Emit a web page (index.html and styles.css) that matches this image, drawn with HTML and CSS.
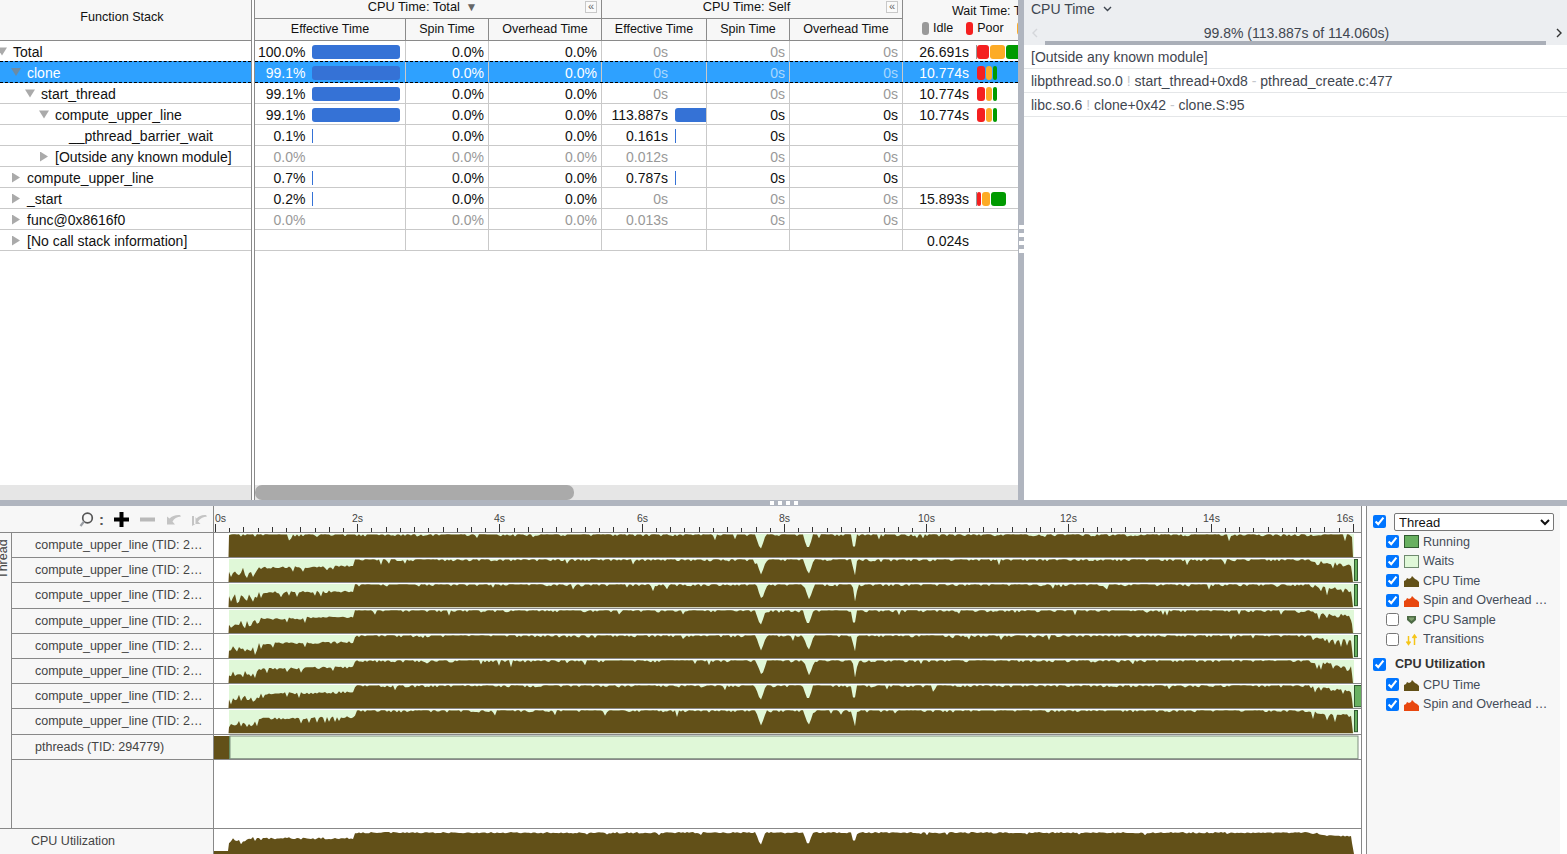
FILE: index.html
```html
<!DOCTYPE html>
<html lang="en">
<head>
<meta charset="utf-8">
<title>Bottom-up</title>
<link rel="stylesheet" href="styles.css">
</head>
<body>
<div class="app">
  <section class="top">
    <div class="grid-pane">
      <div class="fn-col">
        <div class="fn-head">Function Stack</div>
        <div class="fn-rows">
          <div class="fn-row d0"><i class="tw open"></i>Total</div>
          <div class="fn-row d1 sel"><i class="tw open"></i>clone</div>
          <div class="fn-row d2"><i class="tw open"></i>start_thread</div>
          <div class="fn-row d3"><i class="tw open"></i>compute_upper_line</div>
          <div class="fn-row d4"><i class="tw none"></i>__pthread_barrier_wait</div>
          <div class="fn-row d3"><i class="tw"></i>[Outside any known module]</div>
          <div class="fn-row d1"><i class="tw"></i>compute_upper_line</div>
          <div class="fn-row d1"><i class="tw"></i>_start</div>
          <div class="fn-row d1"><i class="tw"></i>func@0x8616f0</div>
          <div class="fn-row d1 last"><i class="tw"></i>[No call stack information]</div>
        </div>
        <div class="hscroll"></div>
      </div>
      <div class="data-col">
        <div class="data-head">
          <div class="group g1"><span>CPU Time: Total <b class="sort">▼</b></span><em class="collapse">«</em></div>
          <div class="group g2"><span>CPU Time: Self</span><em class="collapse">«</em></div>
          <div class="wait-head">
            <div class="wait-title">Wait Time: Total</div>
            <div class="wait-legend">
              <span class="lg"><i class="pill idle"></i>Idle</span>
              <span class="lg"><i class="pill poor"></i>Poor</span>
              <span class="lg"><i class="pill ok"></i>Ok</span>
            </div>
          </div>
          <div class="sub">Effective Time</div>
          <div class="sub">Spin Time</div>
          <div class="sub">Overhead Time</div>
          <div class="sub">Effective Time</div>
          <div class="sub">Spin Time</div>
          <div class="sub">Overhead Time</div>
        </div>
        <div class="data-rows">
          <div class="row">
            <div class="c metered"><span>100.0%</span><i class="meter"><u style="width:100%"></u></i></div><div class="c">0.0%</div><div class="c">0.0%</div>
            <div class="c metered self dim"><span>0s</span></div><div class="c dim">0s</div><div class="c dim">0s</div>
            <div class="c wait"><span>26.691s</span><i class="segs"><u class="seg sliver"></u><u class="seg red" style="width:12px"></u><u class="seg amber" style="width:15px"></u><u class="seg green" style="width:15px"></u></i></div>
          </div>
          <div class="row sel">
            <div class="c metered"><span>99.1%</span><i class="meter"><u style="width:100%"></u></i></div><div class="c">0.0%</div><div class="c">0.0%</div>
            <div class="c metered self dim"><span>0s</span></div><div class="c dim">0s</div><div class="c dim">0s</div>
            <div class="c wait"><span>10.774s</span><i class="segs"><u class="seg red" style="width:8px"></u><u class="seg amber" style="width:6px"></u><u class="seg green" style="width:4px"></u></i></div>
          </div>
          <div class="row">
            <div class="c metered"><span>99.1%</span><i class="meter"><u style="width:100%"></u></i></div><div class="c">0.0%</div><div class="c">0.0%</div>
            <div class="c metered self dim"><span>0s</span></div><div class="c dim">0s</div><div class="c dim">0s</div>
            <div class="c wait"><span>10.774s</span><i class="segs"><u class="seg red" style="width:8px"></u><u class="seg amber" style="width:6px"></u><u class="seg green" style="width:4px"></u></i></div>
          </div>
          <div class="row">
            <div class="c metered"><span>99.1%</span><i class="meter"><u style="width:100%"></u></i></div><div class="c">0.0%</div><div class="c">0.0%</div>
            <div class="c metered self"><span>113.887s</span><i class="meter"><u style="width:100%"></u></i></div><div class="c">0s</div><div class="c">0s</div>
            <div class="c wait"><span>10.774s</span><i class="segs"><u class="seg red" style="width:8px"></u><u class="seg amber" style="width:6px"></u><u class="seg green" style="width:4px"></u></i></div>
          </div>
          <div class="row">
            <div class="c metered"><span>0.1%</span><i class="meter"><u class="tick"></u></i></div><div class="c">0.0%</div><div class="c">0.0%</div>
            <div class="c metered self"><span>0.161s</span><i class="meter"><u class="tick"></u></i></div><div class="c">0s</div><div class="c">0s</div>
            <div class="c wait"></div>
          </div>
          <div class="row">
            <div class="c metered dim"><span>0.0%</span></div><div class="c dim">0.0%</div><div class="c dim">0.0%</div>
            <div class="c metered self dim"><span>0.012s</span></div><div class="c dim">0s</div><div class="c dim">0s</div>
            <div class="c wait"></div>
          </div>
          <div class="row">
            <div class="c metered"><span>0.7%</span><i class="meter"><u class="tick"></u></i></div><div class="c">0.0%</div><div class="c">0.0%</div>
            <div class="c metered self"><span>0.787s</span><i class="meter"><u class="tick"></u></i></div><div class="c">0s</div><div class="c">0s</div>
            <div class="c wait"></div>
          </div>
          <div class="row">
            <div class="c metered"><span>0.2%</span><i class="meter"><u class="tick"></u></i></div><div class="c">0.0%</div><div class="c">0.0%</div>
            <div class="c metered self dim"><span>0s</span></div><div class="c dim">0s</div><div class="c dim">0s</div>
            <div class="c wait"><span>15.893s</span><i class="segs"><u class="seg sliver"></u><u class="seg red" style="width:4px"></u><u class="seg amber" style="width:8px"></u><u class="seg green" style="width:15px"></u></i></div>
          </div>
          <div class="row">
            <div class="c metered dim"><span>0.0%</span></div><div class="c dim">0.0%</div><div class="c dim">0.0%</div>
            <div class="c metered self dim"><span>0.013s</span></div><div class="c dim">0s</div><div class="c dim">0s</div>
            <div class="c wait"></div>
          </div>
          <div class="row last">
            <div class="c"></div><div class="c"></div><div class="c"></div>
            <div class="c"></div><div class="c"></div><div class="c"></div>
            <div class="c wait"><span>0.024s</span></div>
          </div>
        </div>
        <div class="hscroll"><div class="thumb"></div></div>
      </div>
    </div>
    <div class="vsplit"><i></i><i></i><i></i><i></i></div>
    <aside class="stack">
      <div class="stack-head">
        <div class="stack-title">CPU Time
          <svg class="chev" width="9" height="6" viewBox="0 0 9 6"><path d="M1 1l3.5 3.5L8 1" fill="none" stroke="#3f4650" stroke-width="1.4"/></svg>
        </div>
        <div class="stack-nav">
          <svg class="nav" width="6" height="10" viewBox="0 0 6 10"><path d="M5 1L1 5l4 4" fill="none" stroke="#d4d6da" stroke-width="1.4"/></svg>
          <div class="stack-pct">99.8% (113.887s of 114.060s)</div>
          <svg class="nav" width="6" height="10" viewBox="0 0 6 10"><path d="M1 1l4 4-4 4" fill="none" stroke="#333" stroke-width="1.4"/></svg>
        </div>
      </div>
      <div class="frame">[Outside any known module]</div>
      <div class="frame">libpthread.so.0 <span class="sep">!</span> start_thread+0xd8 <span class="sep">-</span> pthread_create.c:477</div>
      <div class="frame">libc.so.6 <span class="sep">!</span> clone+0x42 <span class="sep">-</span> clone.S:95</div>
    </aside>
  </section>

  <div class="hsplit"><i></i><i></i><i></i><i></i></div>

  <section class="timeline">
    <div class="tl-main">
      <div class="tl-head">
        <div class="toolbar">
          <svg class="tool" width="15" height="15" viewBox="0 0 15 15"><circle cx="8.500" cy="6" r="4.800" fill="none" stroke="#555" stroke-width="1.700"/><path d="M5 9.500l-3.500 4.500" stroke="#9a9ea4" stroke-width="2.200"/></svg>
          <span class="colon">:</span>
          <svg class="tool" width="15" height="15" viewBox="0 0 15 15"><path d="M5.500 0h4v5.500H15v4H9.500V15h-4V9.500H0v-4h5.500z" fill="#000"/></svg>
          <svg class="tool" width="15" height="15" viewBox="0 0 15 15"><rect y="5.500" width="15" height="4" fill="#b9b9b9"/></svg>
          <svg class="tool" width="15" height="15" viewBox="0 0 15 15"><path d="M1 12.500V4.500l2.500 2C6 4 10 2.500 14 3l1 1.500C11 5 8 6.500 6.500 9.500l2.500 3z" fill="#c4c4c4"/></svg>
          <svg class="tool" width="15" height="15" viewBox="0 0 15 15"><path d="M0 14V4h2v8h6.500L6 9.500C8 6.500 11 5 15 4.500L14 3C10 2.500 7 4 4.500 6.500L3.500 5v7" fill="#c4c4c4"/></svg>
        </div>
        <svg class="axis" id="axis" width="1147" height="26"></svg>
      </div>
      <div class="tl-body">
        <div class="thread-col"><span>Thread</span></div>
        <div class="tracks">
          <div class="track"><div class="tl-label">compute_upper_line (TID: 294780)</div><svg class="wave" data-track="0" preserveAspectRatio="none" viewBox="0 0 1147 24"></svg></div>
          <div class="track"><div class="tl-label">compute_upper_line (TID: 294781)</div><svg class="wave" data-track="1" preserveAspectRatio="none" viewBox="0 0 1147 24"></svg></div>
          <div class="track"><div class="tl-label">compute_upper_line (TID: 294782)</div><svg class="wave" data-track="2" preserveAspectRatio="none" viewBox="0 0 1147 24"></svg></div>
          <div class="track"><div class="tl-label">compute_upper_line (TID: 294783)</div><svg class="wave" data-track="3" preserveAspectRatio="none" viewBox="0 0 1147 24"></svg></div>
          <div class="track"><div class="tl-label">compute_upper_line (TID: 294784)</div><svg class="wave" data-track="4" preserveAspectRatio="none" viewBox="0 0 1147 24"></svg></div>
          <div class="track"><div class="tl-label">compute_upper_line (TID: 294785)</div><svg class="wave" data-track="5" preserveAspectRatio="none" viewBox="0 0 1147 24"></svg></div>
          <div class="track"><div class="tl-label">compute_upper_line (TID: 294786)</div><svg class="wave" data-track="6" preserveAspectRatio="none" viewBox="0 0 1147 24"></svg></div>
          <div class="track"><div class="tl-label">compute_upper_line (TID: 294787)</div><svg class="wave" data-track="7" preserveAspectRatio="none" viewBox="0 0 1147 24"></svg></div>
          <div class="track">
            <div class="tl-label">pthreads (TID: 294779)</div>
            <svg class="wave" preserveAspectRatio="none" viewBox="0 0 1147 24">
              <rect x="0" y="1" width="15" height="23" fill="#625018"/>
              <rect x="15" y="1" width="1" height="23" fill="#4f8f4f"/>
              <rect x="16" y="1" width="1128" height="22.500" fill="#e0f8d8" stroke="#7f8f7f"/>
            </svg>
          </div>
          <div class="filler"><div class="tl-label"></div><div class="tl-blank"></div></div>
        </div>
      </div>
      <div class="tl-util">
        <div class="util-label">CPU Utilization</div>
        <svg class="wave" data-util="1" preserveAspectRatio="none" viewBox="0 0 1147 25"></svg>
      </div>
    </div>
    <div class="tl-gap"></div>
    <aside class="legend">
      <label class="lg-master"><input type="checkbox" checked>
        <select class="lg-select"><option>Thread</option></select>
      </label>
      <label class="lg-row"><input type="checkbox" checked><i class="sw running"></i><span>Running</span></label>
      <label class="lg-row"><input type="checkbox" checked><i class="sw waits"></i><span>Waits</span></label>
      <label class="lg-row"><input type="checkbox" checked><svg class="sw-svg" width="15" height="13" viewBox="0 0 15 13"><path d="M0 13V7l2-1 1-2 2 1 2-1 1-2 2 2 1 1 2 1 2 2v5z" fill="#625018"/></svg><span>CPU Time</span></label>
      <label class="lg-row"><input type="checkbox" checked><svg class="sw-svg" width="15" height="13" viewBox="0 0 15 13"><path d="M0 13V7l2-1 1-2 2 1 2-1 1-2 2 2 1 1 2 1 2 2v5z" fill="#e8470f"/></svg><span>Spin and Overhead Time</span></label>
      <label class="lg-row"><input type="checkbox"><svg class="sw-svg" width="15" height="13" viewBox="0 0 15 13"><path d="M3 3h9v4l-4.500 4L3 7z" fill="#4d6b45"/><path d="M5 4.500h5v1.500l-2.500 2L5 6z" fill="#7fa06f"/></svg><span>CPU Sample</span></label>
      <label class="lg-row"><input type="checkbox"><svg class="sw-svg" width="15" height="13" viewBox="0 0 15 13"><path d="M4.500 3v7M2.500 8.500l2 3 2-3M10.500 12V4M8.500 5l2-3 2 3" fill="none" stroke="#f5c518" stroke-width="1.500"/></svg><span>Transitions</span></label>
      <label class="lg-master util"><input type="checkbox" checked><b>CPU Utilization</b></label>
      <label class="lg-row"><input type="checkbox" checked><svg class="sw-svg" width="15" height="13" viewBox="0 0 15 13"><path d="M0 13V7l2-1 1-2 2 1 2-1 1-2 2 2 1 1 2 1 2 2v5z" fill="#625018"/></svg><span>CPU Time</span></label>
      <label class="lg-row"><input type="checkbox" checked><svg class="sw-svg" width="15" height="13" viewBox="0 0 15 13"><path d="M0 13V7l2-1 1-2 2 1 2-1 1-2 2 2 1 1 2 1 2 2v5z" fill="#e8470f"/></svg><span>Spin and Overhead Time</span></label>
    </aside>
    <div class="tl-edge"></div>
  </section>
</div>
<script src="app.js"></script>
</body>
</html>
```
FILE: styles.css
```css
* { box-sizing: border-box; }
html, body { margin: 0; height: 100%; overflow: hidden; background: #fff; }
body { font: 14px "Liberation Sans", Arial, sans-serif; color: #111; }
i, u, em, b.sort { font-style: normal; text-decoration: none; }

.app { width: 1567px; height: 854px; display: flex; flex-direction: column; overflow: hidden; }

/* top area */
.top { height: 500px; display: flex; flex: none; }
.grid-pane { width: 1018px; display: flex; flex: none; overflow: hidden; }
.fn-col { width: 252px; flex: none; display: flex; flex-direction: column; border-right: 1px solid #8a8a8a; overflow: hidden; }
.data-col { width: 764px; margin-left: 2px; flex: none; display: flex; flex-direction: column; border-left: 1px solid #8a8a8a; }

.fn-head { height: 41px; flex: none; background: #f7f7f7; border-bottom: 1px solid #8a8a8a; font-size: 12.6px; display: flex; align-items: center; justify-content: center; padding: 0 7px 7px 0; }
.fn-rows, .data-rows { flex: 1; min-height: 0; }
.fn-row { height: 21px; padding-top: 2px; border-bottom: 1px solid #c9c9c9; display: flex; align-items: center; white-space: nowrap; }
.d0 { padding-left: 0; }
.d1 { padding-left: 14px; }
.d2 { padding-left: 28px; }
.d3 { padding-left: 42px; }
.d4 { padding-left: 56px; }
.tw { width: 10px; height: 10px; margin: -1px 6px 0 -3px; flex: none; background: #aaa; clip-path: polygon(1px 0, 9px 5px, 1px 10px); }
.tw.open { clip-path: polygon(0 1px, 10px 1px, 5px 9px); }
.tw.none { background: none; }

.sel { background: #2ea1ff; color: #fff; }
.fn-row.sel, .row.sel { border-top: 1px dashed #000; border-bottom: 1px dashed #000; height: 22px; margin-top: -1px; }
.fn-row.sel { padding-top: 1px; }
.fn-row.sel .tw { background: #6d8ba3; }

.data-head { height: 41px; flex: none; background: #f7f7f7; border-bottom: 1px solid #8a8a8a; display: grid; grid-template-columns: 151px 83px 113px 105px 83px 113px 115px; grid-template-rows: 19px 21px; font-size: 12.5px; }
.group { grid-column: span 3; border-bottom: 1px solid #8a8a8a; border-right: 1px solid #8a8a8a; position: relative; text-align: center; padding-right: 11px; line-height: 14px; font-size: 12.8px; }
.sort { font-size: 12px; color: #666; margin-left: 2px; font-weight: normal; line-height: 12px; }
.collapse { position: absolute; right: 4px; top: 1px; width: 12px; height: 12px; border: 1px solid #c8c8c8; background: #fafafa; color: #666; font-size: 11px; line-height: 8px; text-align: center; }
.sub { border-right: 1px solid #8a8a8a; text-align: center; line-height: 21px; }
.wait-head { grid-column: 7; grid-row: 1 / span 2; white-space: nowrap; overflow: hidden; padding-left: 19px; }
.wait-title { padding: 4px 0 0 30px; line-height: 14px; }
.wait-legend { display: flex; gap: 13px; margin-top: 2px; height: 16px; align-items: center; }
.lg { display: flex; align-items: center; gap: 4px; }
.pill { width: 7px; height: 13px; border-radius: 3px; display: block; }
.pill.idle { background: #999; }
.pill.poor { background: #f52020; }
.pill.ok { background: #fdab26; }

.row { height: 21px; display: grid; grid-template-columns: 151px 83px 113px 105px 83px 113px 115px; border-bottom: 1px solid #c9c9c9; }
.c { border-right: 1px solid #c9c9c9; text-align: right; padding-right: 4px; line-height: 22px; white-space: nowrap; height: 20px; }
.dim { color: #999; }
.row.sel .c.dim { color: #a9d7fd; }
.metered { display: flex; padding-right: 4px; }
.metered > span { width: 50.5px; flex: none; text-align: right; }
.meter { width: 88px; margin-left: 6.5px; height: 14px; margin-top: 4px; display: block; flex: none; }
.meter u { display: block; height: 100%; background: #3572d6; border-radius: 3px; }
.meter u.tick { width: 1px; border-radius: 0; }
.self { padding-right: 0; }
.self > span { width: 66px; }
.self .meter { width: 31px; margin-left: 7px; }
.self .meter u { border-radius: 3px 0 0 3px; }
.self .meter u.tick { border-radius: 0; }
.wait { border-right: 0; display: flex; padding: 0; overflow: hidden; }
.wait > span { width: 66px; flex: none; text-align: right; }
.segs { display: flex; gap: 1px; margin: 4px 0 0 8px; height: 14px; flex: none; }
.seg { display: block; height: 100%; border-radius: 3px; }
.seg.sliver { width: 1px; background: #999; border-radius: 0; margin-left: -1px; margin-right: -1px; }
.seg.red { background: #f52020; }
.seg.amber { background: #fdab26; }
.seg.green { background: #009a00; }

.hscroll { height: 15px; flex: none; background: #e6e6e6; }
.thumb { width: 319px; height: 15px; background: #aaa; border-radius: 7px; }

.vsplit { width: 6px; flex: none; background: #b0b5bf; display: flex; flex-direction: column; align-items: flex-end; gap: 4px; padding-top: 225px; }
.vsplit i { width: 5px; height: 4px; background: #fff; display: block; }
.hsplit { height: 6px; flex: none; background: #b0b5bf; display: flex; justify-content: center; gap: 4px; padding: 1px 0 1px 1px; }
.hsplit i { width: 4px; height: 4px; background: #fff; display: block; }

.stack { flex: 1; min-width: 0; color: #3f4650; }
.stack-head { height: 45px; background: #eceef1; }
.stack-title { height: 18px; padding-left: 7px; line-height: 18px; display: flex; align-items: center; gap: 8px; }
.stack-nav { height: 27px; display: flex; align-items: flex-start; padding: 10px 5px 0 8px; }
.stack-pct { width: 501px; height: 20px; margin: -3px auto 0 7px; padding-left: 2px; border-bottom: 4px solid #aaafb8; text-align: center; line-height: 16px; flex: none; }
.nav { flex: none; }
.frame { height: 24px; line-height: 24px; padding-left: 7px; border-bottom: 1px solid #e4e6e8; white-space: nowrap; }
.sep { color: #c4c7cc; }

/* timeline */
.timeline { flex: 1; min-height: 0; display: flex; }
.tl-main { width: 1362px; flex: none; border-right: 1px solid #888; display: flex; flex-direction: column; }
.tl-head { height: 27px; flex: none; display: flex; background: #f7f7f7; border-bottom: 1px solid #888; }
.toolbar { width: 214px; flex: none; border-right: 1px solid #888; display: flex; align-items: center; justify-content: flex-end; gap: 11px; padding: 0 6px 0 0; }
.tool { display: block; flex: none; }
.colon { width: 5px; font-size: 15px; font-weight: bold; color: #555; margin: 0 -1px 0 -6px; line-height: 15px; }
.axis { display: block; flex: none; }
.axis text { font: 10.5px "Liberation Sans", Arial, sans-serif; fill: #444; }
.tl-body { height: 296px; flex: none; display: flex; border-bottom: 1px solid #888; }
.thread-col { width: 12px; flex: none; background: #f7f7f7; border-right: 1px solid #888; overflow: hidden; font-size: 12.5px; color: #444; }
.thread-col span { display: block; writing-mode: vertical-rl; transform: rotate(180deg); height: 40px; margin: 6px 0 0 -3px; line-height: 13px; white-space: nowrap; }
.tracks { flex: 1; min-width: 0; display: flex; flex-direction: column; }
.track { height: 25.2px; flex: none; display: flex; border-bottom: 1px solid #888; }
.tl-label { width: 202px; flex: none; background: #f7f7f7; border-right: 1px solid #888; font-size: 12.5px; color: #444; padding: 0 8px 0 23px; line-height: 24px; white-space: nowrap; overflow: hidden; text-overflow: ellipsis; }
.wave { display: block; flex: 1; min-width: 0; height: 100%; background: #fff; }
.filler { flex: 1; min-height: 0; display: flex; }
.tl-blank { flex: 1; background: #fff; }
.tl-util { flex: 1; min-height: 0; display: flex; }
.util-label { width: 214px; flex: none; background: #f7f7f7; border-right: 1px solid #888; font-size: 12.5px; color: #444; padding-left: 31px; line-height: 24px; }
.tl-gap { width: 5px; flex: none; border-right: 1px solid #888; background: #fff; }
.legend { width: 193px; flex: none; background: #f7f7f7; padding: 7px 0 0 6px; display: flex; flex-direction: column; font-size: 12.6px; color: #444c58; }
.tl-edge { flex: 1; background: #fff; }
.legend input { width: 13px; height: 13px; margin: 0; flex: none; }
.lg-master { display: flex; align-items: center; gap: 8px; height: 17px; margin-bottom: 2px; }
.lg-select { width: 160px; height: 18px; padding: 0 0 2px 0; font: 13px "Liberation Sans", Arial, sans-serif; color: #111; background: #fff; border: 1px solid #777; border-radius: 2px; }
.lg-row { display: flex; align-items: center; height: 19.5px; padding-left: 13px; white-space: nowrap; }
.lg-row input { margin-right: 5px; }
.lg-row span { width: 125px; margin-left: 4px; overflow: hidden; text-overflow: ellipsis; }
.sw, .sw-svg { width: 15px; height: 13px; flex: none; display: block; }
.sw.running { background: #68b060; border: 1px solid #2f5a2f; }
.sw.waits { background: #e0f8d8; border: 1px solid #6f8a6f; }
.lg-master.util { margin-top: 5px; margin-bottom: 1px; gap: 9px; height: 20px; color: #333; }
```
FILE: app.js
```js
(function () {
  var BROWN = '#625018', LIGHT = '#e0f8d8', GREEN = '#68b060', DARK = '#2f5a2f';
  var NS = 'http://www.w3.org/2000/svg';

  function rng(seed) {
    return function () {
      seed = (seed + 0x6d2b79f5) | 0;
      var t = Math.imul(seed ^ (seed >>> 15), 1 | seed);
      t = (t + Math.imul(t ^ (t >>> 7), 61 | t)) ^ t;
      return ((t ^ (t >>> 14)) >>> 0) / 4294967296;
    };
  }
  function el(name, attrs) {
    var e = document.createElementNS(NS, name);
    for (var k in attrs) e.setAttribute(k, attrs[k]);
    return e;
  }

  /* x in canvas px: 0 = 214 on screen; the activity runs from 15 to 1139 */
  var START = 15, END = 1139, STEP = 140;
  /* centre, half width, depth of the three shared pauses */
  var DIPS = [[546.5, 5, 15], [594, 5, 15], [640, 2.5, 18]];

  function topAt(x, i, r, first) {
    var y;
    if (x < STEP && !first) {
      y = 9 - (x - 15) / 125 * 2 + r() * 2.5;
      if (x < 45) y += 5 * Math.abs(Math.sin(x * (0.42 + i * 0.015))) + r() * 4;
      if (r() < 0.06) y += 4;
    } else {
      y = 1.2 + (r() < 0.3 ? 1 + r() * 1.2 : r() * 0.4);
      if (r() < 0.025) y += 2 + r() * 3.5;
    }
    if (x > 1095 && !first) {
      y += (x - 1095) * 0.1 + r() * 3;
      if (r() < 0.2) y += r() * 7;
    }
    for (var d = 0; d < DIPS.length; d++) {
      var dist = Math.abs(x - DIPS[d][0] - ((i * 7) % 3) * 0.6);
      if (dist < DIPS[d][1]) y = Math.max(y, DIPS[d][2] * Math.pow(1 - dist / DIPS[d][1], 0.8) + 1.5);
    }
    return Math.min(y, 23);
  }

  function polygon(i, bottom, r, first) {
    var pts = [START - 0.5 + ',' + bottom];
    for (var x = START; x <= END - 2; x += 2) {
      pts.push(x.toFixed(1) + ',' + topAt(x, i, r, first).toFixed(1));
    }
    pts.push(END - 1 + ',' + (first ? 4 : 15), END + ',' + bottom);
    return el('polygon', { points: pts.join(' '), fill: BROWN });
  }

  /* width of the running bar at the right end of each thread */
  var RUN = [0, 4, 4, 0, 4, 0, 8, 4];
  document.querySelectorAll('.wave[data-track]').forEach(function (svg) {
    var i = +svg.getAttribute('data-track');
    var r = rng(i * 131 + 7);
    svg.appendChild(el('rect', { x: START, y: 1, width: END - START + 1, height: 23, fill: LIGHT }));
    svg.appendChild(polygon(i, 24, r, i === 0));
    if (RUN[i]) {
      svg.appendChild(el('rect', { x: END + 1.5, y: 1.5, width: RUN[i] - 1, height: 21, fill: GREEN, stroke: DARK }));
    }
  });

  var util = document.querySelector('.wave[data-util]');
  if (util) {
    var ru = rng(991);
    var pts = ['0,25', '0,22', START - 1 + ',22'];
    for (var x = START; x <= END - 2; x += 2) {
      var y = x < STEP ? 8 + ru() * 2.5 : 3 + ru() * 1.4;
      if (x < 35) y += ru() * 6;
      if (ru() < 0.03) y += 2;
      if (x > 1095) y += (x - 1095) * 0.05 + ru() * 2;
      for (var d = 0; d < DIPS.length; d++) {
        var dist = Math.abs(x - DIPS[d][0]);
        if (dist < DIPS[d][1]) y = Math.max(y, 3 + 14 * (1 - dist / DIPS[d][1]));
      }
      pts.push(x.toFixed(1) + ',' + y.toFixed(1));
    }
    pts.push(END - 1 + ',14', END + 1 + ',25');
    util.appendChild(el('polygon', { points: pts.join(' '), fill: BROWN }));
  }

  /* time axis: 0 s at 1 px in the canvas, 71.1 px per second, minor tick every 0.2 s */
  var axis = document.getElementById('axis');
  var PPS = 71.12;
  for (var n = 0; n <= 80; n++) {
    var tx = Math.round(1 + n * 0.2 * PPS) + 0.5;
    var major = n % 10 === 0;
    var h = major ? 8 : (n % 2 === 0 ? 5 : 4);
    axis.appendChild(el('line', { x1: tx, x2: tx, y1: 26 - h, y2: 26, stroke: '#333', 'stroke-width': 1 }));
    if (major) {
      var sec = n / 5;
      var t = el('text', { x: tx, y: 16, 'text-anchor': 'middle' });
      if (sec === 0) { t.setAttribute('text-anchor', 'start'); t.setAttribute('x', 1); }
      if (sec === 16) { t.setAttribute('text-anchor', 'end'); t.setAttribute('x', tx); }
      t.textContent = sec + 's';
      axis.appendChild(t);
    }
  }
})();
```
